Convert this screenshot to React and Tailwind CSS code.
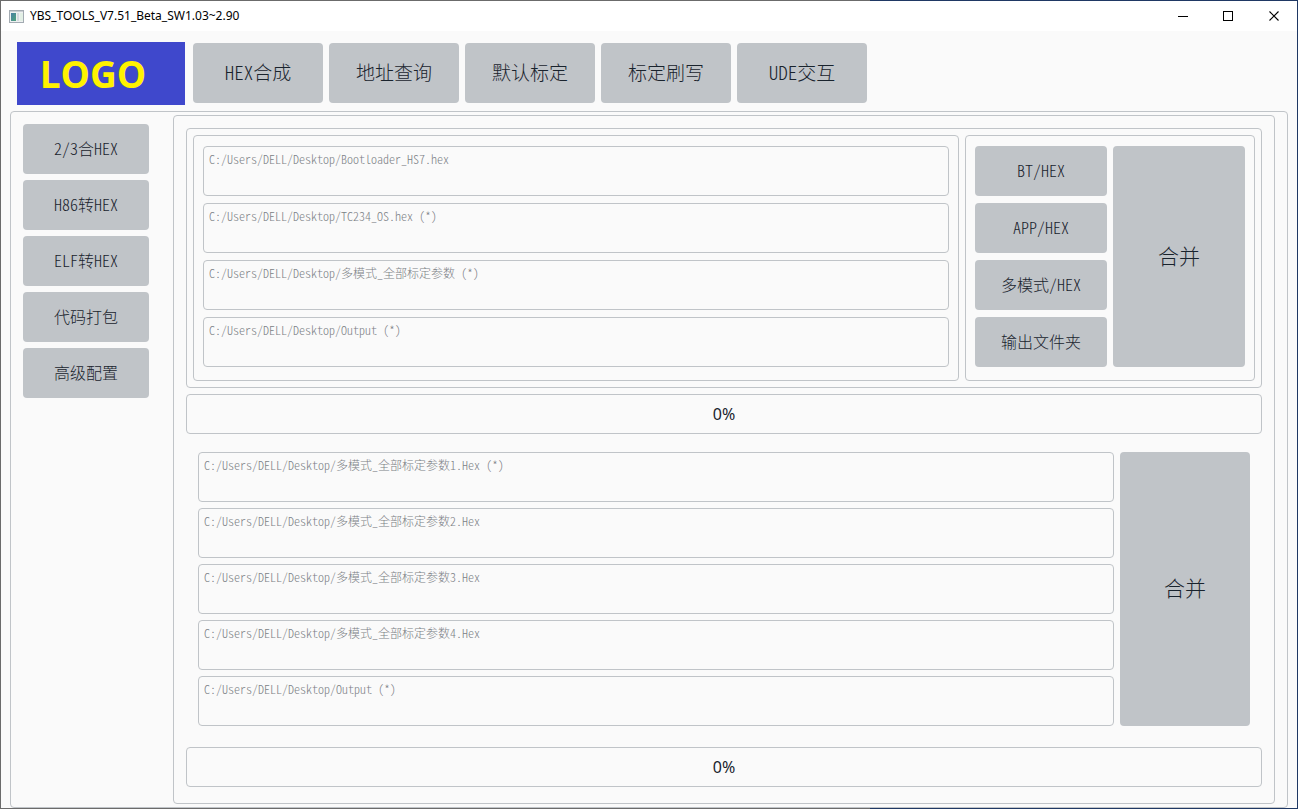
import React, { useState } from 'react';

const navItems = ['HEX合成', '地址查询', '默认标定', '标定刷写', 'UDE交互'];

const sideItems = ['2/3合HEX', 'H86转HEX', 'ELF转HEX', '代码打包', '高级配置'];

const sources = [
  { name: 'bootloader', action: 'BT/HEX', path: 'C:/Users/DELL/Desktop/Bootloader_HS7.hex' },
  { name: 'app', action: 'APP/HEX', path: 'C:/Users/DELL/Desktop/TC234_OS.hex (*)' },
  { name: 'modes', action: '多模式/HEX', path: 'C:/Users/DELL/Desktop/多模式_全部标定参数 (*)' },
  { name: 'output', action: '输出文件夹', path: 'C:/Users/DELL/Desktop/Output (*)' },
];

const modeFiles = [
  'C:/Users/DELL/Desktop/多模式_全部标定参数1.Hex (*)',
  'C:/Users/DELL/Desktop/多模式_全部标定参数2.Hex',
  'C:/Users/DELL/Desktop/多模式_全部标定参数3.Hex',
  'C:/Users/DELL/Desktop/多模式_全部标定参数4.Hex',
  'C:/Users/DELL/Desktop/Output (*)',
];

const GrayButton = ({ className, children, ...props }) => (
  <button
    type="button"
    className={`rounded-sm bg-[#c0c4c8] pb-0.5 font-light text-[#19232d] hover:bg-[#b0b5ba] ${className}`}
    {...props}
  >
    {children}
  </button>
);

const PathBox = ({ label, placeholder }) => {
  const [value, setValue] = useState('');
  return (
    <textarea
      aria-label={label}
      value={value}
      onChange={(e) => setValue(e.target.value)}
      placeholder={placeholder}
      className="block h-[50px] w-full resize-none rounded-sm border border-[#c0c4c8] bg-[#fafafa] px-[5px] py-1 text-xs font-light text-[#19232d] outline-none placeholder:text-[#7b8085]"
    />
  );
};

const Progress = ({ label, value }) => (
  <div
    role="progressbar"
    aria-label={label}
    aria-valuenow={value}
    className="flex h-10 shrink-0 items-center justify-center rounded-sm border border-[#c0c4c8] font-['Noto_Sans',sans-serif] text-base text-[#19232d]"
  >
    {value}%
  </div>
);

const TitleBar = () => (
  <header className="flex h-[30px] shrink-0 items-center bg-white pl-2 font-['Noto_Sans',sans-serif] text-xs text-black">
    <svg width="15" height="13" viewBox="0 0 15 13" className="mr-[6px]" aria-hidden="true">
      <defs>
        <linearGradient id="pane" x1="0" y1="0" x2="1" y2="1">
          <stop offset="0" stopColor="#4a7fa5" />
          <stop offset="1" stopColor="#4fa37c" />
        </linearGradient>
      </defs>
      <rect x="0.5" y="0.5" width="14" height="12" fill="#eef0f1" stroke="#a3abb2" />
      <rect x="1" y="1" width="13" height="1" fill="#c9ced2" />
      <rect x="2" y="3" width="5" height="8" fill="url(#pane)" />
      <rect x="8" y="3" width="2" height="8" fill="#d5dade" />
      <rect x="11" y="3" width="3" height="8" fill="#e2efe5" />
    </svg>
    <h1>YBS_TOOLS_V7.51_Beta_SW1.03~2.90</h1>
    <div className="ml-auto flex h-full">
      <button type="button" aria-label="最小化" className="flex w-[45px] items-center justify-center">
        <svg width="11" height="11" viewBox="0 0 11 11" shapeRendering="crispEdges">
          <path d="M0 5.5h10" stroke="currentColor" />
        </svg>
      </button>
      <button type="button" aria-label="最大化" className="flex w-[45px] items-center justify-center">
        <svg width="11" height="11" viewBox="0 0 11 11" shapeRendering="crispEdges">
          <path d="M.5 .5h9v9h-9z" fill="none" stroke="currentColor" />
        </svg>
      </button>
      <button type="button" aria-label="关闭" className="flex w-[46px] items-center justify-center">
        <svg width="11" height="11" viewBox="0 0 11 11">
          <path d="M.5 .5l9 9M9.5 .5l-9 9" stroke="currentColor" strokeWidth="1.1" />
        </svg>
      </button>
    </div>
  </header>
);

const App = () => {
  return (
    <div className="flex min-h-screen flex-col bg-linear-to-r from-[#6b6b6b] from-67% to-[#1f3864] to-67% p-px font-['Noto_Sans_CJK_SC',sans-serif] [font-feature-settings:'hwid']">
      <TitleBar />
      <div className="flex grow flex-col bg-[#fafafa] px-[9px]">
        <div className="flex h-20 shrink-0 items-start pt-[11px] pl-[7px]">
          <div className="mr-2 flex h-[63px] w-[168px] items-center justify-center bg-[#3f48cc] pr-4 font-['Open_Sans',sans-serif] text-[37px] font-bold text-[#fff200]">
            LOGO
          </div>
          <nav className="flex gap-[6px] pt-px">
            {navItems.map((item) => (
              <GrayButton key={item} className="h-[60px] w-[130px] text-[19px]">
                {item}
              </GrayButton>
            ))}
          </nav>
        </div>

        <div className="flex grow rounded-sm border border-[#c0c4c8] px-3 py-[3px]">
          <aside className="flex w-[150px] shrink-0 flex-col gap-[6px] pt-[9px]">
            {sideItems.map((item) => (
              <GrayButton key={item} className="h-[50px] w-[126px] text-base">
                {item}
              </GrayButton>
            ))}
          </aside>

          <main className="flex min-w-0 grow flex-col rounded-sm border border-[#c0c4c8] px-3 pt-3 pb-4">
            {/* merge of bootloader, app and mode files */}
            <section className="flex gap-[6px] rounded-sm border border-[#c0c4c8] p-[6px]">
              <div className="flex min-w-0 grow flex-col gap-[7px] rounded-sm border border-[#c0c4c8] px-[9px] pt-[10px] pb-[13px]">
                {sources.map((s) => (
                  <PathBox key={s.name} label={s.action} placeholder={s.path} />
                ))}
              </div>
              <div className="flex shrink-0 gap-[6px] rounded-sm border border-[#c0c4c8] px-[9px] pt-[10px] pb-[13px]">
                <div className="flex flex-col gap-[7px]">
                  {sources.map((s) => (
                    <GrayButton key={s.name} className="h-[50px] w-[132px] text-base">
                      {s.action}
                    </GrayButton>
                  ))}
                </div>
                <GrayButton className="w-[132px] text-[21px]">合并</GrayButton>
              </div>
            </section>

            <div className="mt-[6px] flex flex-col">
              <Progress label="合并进度" value={0} />
            </div>

            {/* merge of the calibration files */}
            <section className="flex gap-[6px] px-3 pt-[18px] pb-[21px]">
              <div className="flex min-w-0 grow flex-col gap-[6px]">
                {modeFiles.map((path, i) => (
                  <PathBox key={path} label={`文件 ${i + 1}`} placeholder={path} />
                ))}
              </div>
              <GrayButton className="w-[130px] text-[21px]">合并</GrayButton>
            </section>

            <Progress label="标定合并进度" value={0} />
          </main>
        </div>
      </div>
    </div>
  );
};

export default App;
